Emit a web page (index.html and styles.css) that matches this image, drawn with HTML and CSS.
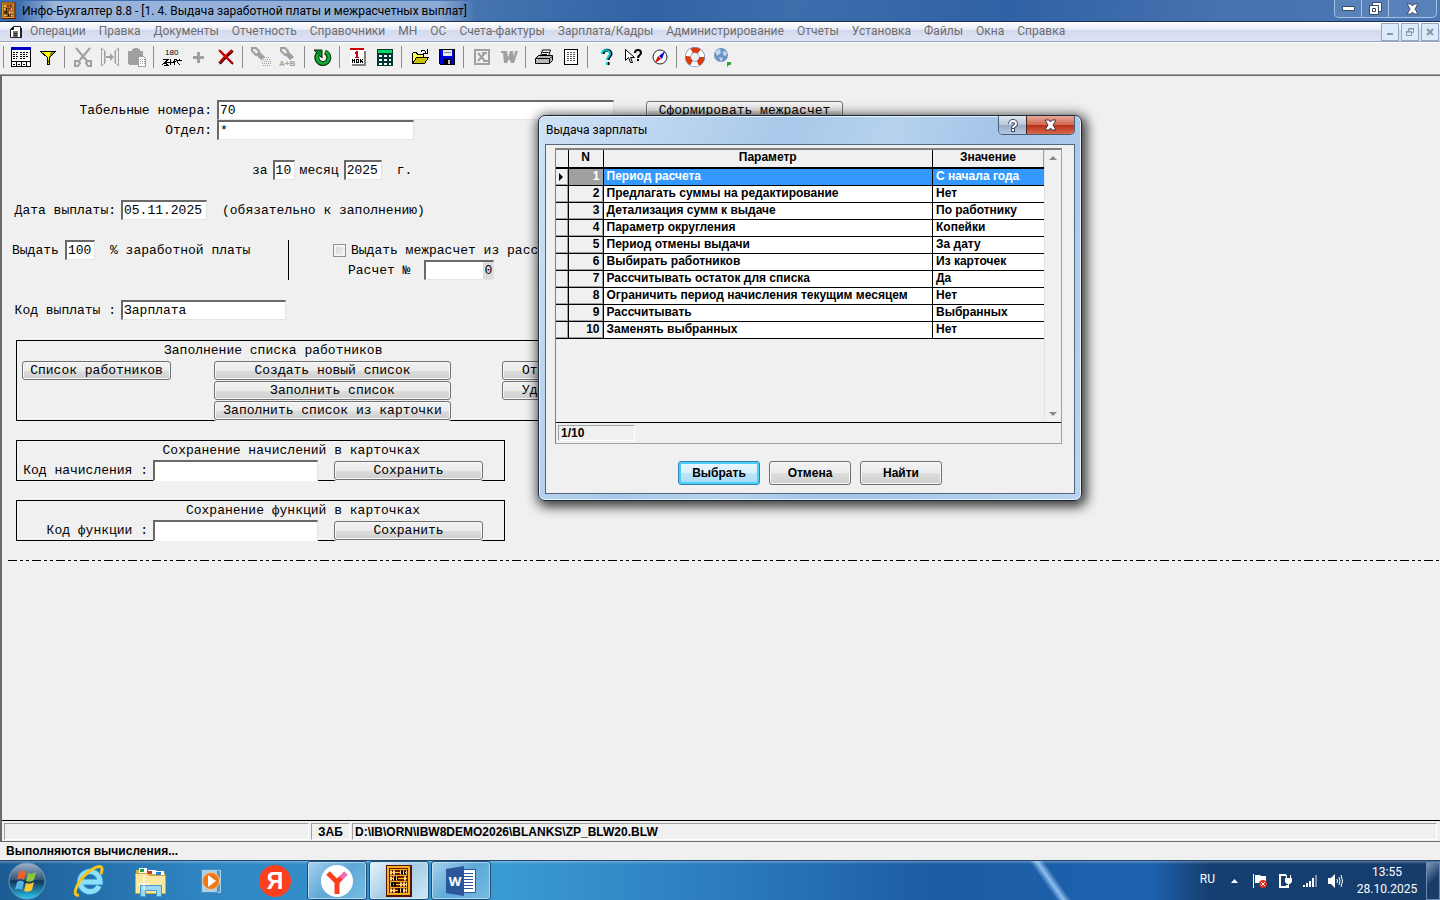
FILE: index.html
```html
<!DOCTYPE html>
<html lang="ru">
<head>
    <meta charset="UTF-8">
    <meta name="viewport" content="width=device-width, initial-scale=1.0">
    <title>Инфо-Бухгалтер 8.8</title>
    <link rel="stylesheet" href="styles.css">
</head>
<body>
    <svg width="0" height="0" class="symbols" aria-hidden="true">
        <symbol id="abacus" viewBox="0 0 26 32">
            <path fill="#5a1000" d="M0 0h26v32H0z"/>
            <path fill="#f0b020" d="M1 1h23v29H1z"/>
            <path fill="#6a1800" d="M3 3h19v25H3z"/>
            <path fill="#f0b020" d="M4 4h17v1H4zM4 10h17v1H4zM4 16h17v1H4zM4 22h17v1H4z"/>
            <path stroke="#f4d020" d="M4 7.500h17M4 13.500h17M4 19.500h17M4 25.500h17"/>
            <path stroke="#ffd890" stroke-width="4" stroke-dasharray="2 1" d="M4 7.500h5M14 7.500h7M4 13.500h9M18 13.500h3M4 19.500h3M14 19.500h7M4 25.500h6M14 25.500h7"/>
            <path stroke="#000" stroke-width="4" stroke-dasharray="2 1" d="M15 7.500h4M8 13.500h4M5 19.500h6M12 25.500h5"/>
        </symbol>
    </svg>

    <header class="titlebar">
        <svg class="app-icon" width="15" height="17"><use href="#abacus"/></svg>
        <h1 class="app-title">Инфо-Бухгалтер 8.8 - [1. 4. Выдача заработной платы и межрасчетных выплат]</h1>
        <div class="win-buttons">
            <button type="button" class="win-min" aria-label="Свернуть"><svg width="13" height="7"><path fill="#fff" stroke="#3c4a66" d="M.5 1.500h12v4H.5z"/></svg></button>
            <button type="button" class="win-max" aria-label="Восстановить"><svg width="13" height="13"><path fill="#fff" stroke="#3c4a66" d="M3.500.5h9v9h-9z"/><path fill="#fff" stroke="#3c4a66" d="M.5 3.500h9v9h-9zM3.500 6.500h3v3h-3z"/></svg></button>
            <button type="button" class="win-close" aria-label="Закрыть"><svg width="13" height="12"><path fill="#fff" stroke="#3c4a66" d="M1 1h4l1.500 2L8 1h4L9 6l3 5H8L6.500 9 5 11H1l3-5z"/></svg></button>
        </div>
    </header>

    <nav class="menubar">
        <svg class="doc-icon" width="12" height="12"><path fill="#fff" stroke="#222" d="M3.500.5h7v11h-10v-8z"/><path fill="#777" d="M3 5h5v6H3z"/><path stroke="#222" d="M.5 3.500h3v-3M4 7.500h3M4 9.500h3M11.500 2v10"/></svg>
        <button type="button">Операции</button>
        <button type="button">Правка</button>
        <button type="button">Документы</button>
        <button type="button">Отчетность</button>
        <button type="button">Справочники</button>
        <button type="button">МН</button>
        <button type="button">ОС</button>
        <button type="button">Счета-фактуры</button>
        <button type="button">Зарплата/Кадры</button>
        <button type="button">Администрирование</button>
        <button type="button">Отчеты</button>
        <button type="button">Установка</button>
        <button type="button">Файлы</button>
        <button type="button">Окна</button>
        <button type="button">Справка</button>
        <div class="mdi-buttons">
            <button type="button" aria-label="Свернуть окно"><svg width="8" height="8"><path fill="#8496aa" d="M1 5h6v2H1z"/></svg></button>
            <button type="button" aria-label="Восстановить окно"><svg width="8" height="8"><path fill="none" stroke="#8496aa" d="M2.500 3V.5h5v4H6M.5 3.500h5v4h-5zM.5 4h5M2.500 1h5"/></svg></button>
            <button type="button" aria-label="Закрыть окно"><svg width="8" height="8"><path stroke="#8496aa" stroke-width="2" d="M1 1l6 6M7 1L1 7"/></svg></button>
        </div>
    </nav>

    <div class="toolbar">
        <span class="sep"></span>
        <button type="button" aria-label="Журнал"><svg class="ico" viewBox="0 0 20 20"><path fill="#fff" stroke="#000" d="M.5.5h19v19H.5z"/><path fill="#0000c0" d="M0 0h20v3H0z"/><path stroke="#000" stroke-dasharray="2 1" d="M2 5.500h5M9 5.500h9M2 7.500h4M9 7.500h7M2 9.500h5M9 9.500h9M2 11.500h4M9 11.500h6"/><path stroke="#000" d="M0 14.500h20M5.500 14v6M10.500 14v6M15.500 14v6M2 17.500h2M7 17.500h2M12 17.500h2"/></svg></button>
        <button type="button" aria-label="Фильтр"><svg class="ico" viewBox="0 0 20 20"><path fill="#ffff00" stroke="#000" d="M2.500 4.500h15l-6 6v7h-2v-7z"/><path fill="#888000" d="M11 10l5-5h-3zM11 10v6h-1z"/></svg></button>
        <span class="sep"></span>
        <button type="button" disabled aria-label="Вырезать"><svg class="ico smooth" viewBox="0 0 20 20"><path fill="none" stroke="#a0a0a0" stroke-width="2" d="M3 1l11 13M17 1L6 14M9 9l2 2"/><path fill="none" stroke="#a0a0a0" stroke-width="2" d="M2 14h3l2 2-2 3H2zM18 14h-3l-2 2 2 3h3z"/></svg></button>
        <button type="button" disabled aria-label="Копировать"><svg class="ico smooth" viewBox="0 0 20 20"><path fill="none" stroke="#a0a0a0" d="M1.500 1v18M4.500 4v12M1 1l4 3v12l-4 3M18.500 1v18M15.500 4v12M19 1l-4 3v12l4 3"/><path fill="#a0a0a0" d="M6 9h4V6l4 4-4 4v-3H6z"/></svg></button>
        <button type="button" disabled aria-label="Вставить"><svg class="ico" viewBox="0 0 20 20"><path fill="#a0a0a0" d="M1 4h4V2h2V1h4v1h2v2h3v6h-4v8H2l-1-1z"/><path fill="#fff" stroke="#a0a0a0" d="M11.500 9.500h5l2 2v8h-7z"/><path stroke="#a0a0a0" stroke-dasharray="1 1" d="M13 12.500h5M13 14.500h5M13 16.500h5"/></svg></button>
        <span class="sep"></span>
        <button type="button" aria-label="Пересчет"><svg class="ico" viewBox="0 0 20 20"><text x="3" y="8" class="ico-text">180</text><path fill="none" stroke="#000" d="M1 12.500h5l-3 3 3 3H2M8 12v6M8 15h4M12 18v-6h3M18 12l-3 3 3 3M0 18l4-3 4 1 6-2 6-1"/></svg></button>
        <button type="button" disabled aria-label="Добавить"><svg class="ico" viewBox="0 0 20 20"><path stroke="#a0a0a0" stroke-width="3" d="M4 10h11M9.500 4.500v11"/></svg></button>
        <button type="button" aria-label="Удалить"><svg class="ico smooth" viewBox="0 0 20 20"><path fill="none" stroke="#400" stroke-width="2" d="M4 4l13 13M17 4C11 9 8 12 4 17"/><path fill="none" stroke="#d00000" stroke-width="2" d="M3 3l13 13M16 3C10 8 7 11 3 16"/></svg></button>
        <span class="sep"></span>
        <button type="button" disabled aria-label="Найти"><svg class="ico smooth" viewBox="0 0 20 20"><path fill="#e8e8e8" stroke="#a0a0a0" stroke-width="2" d="M1 1h4l3 3v2L5 8 1 4z"/><path fill="#a0a0a0" d="M8 4l6 6-4 3-5-5z"/><path stroke="#a0a0a0" stroke-dasharray="1 1" d="M13 10.500h5M10 12.500h9M11 14.500h9M11 16.500h9M12 18.500h8"/></svg></button>
        <button type="button" disabled aria-label="Заменить"><svg class="ico smooth" viewBox="0 0 20 20"><path fill="#e8e8e8" stroke="#a0a0a0" stroke-width="2" d="M3 1h4l3 3v2L7 8 3 4z"/><path fill="#a0a0a0" d="M10 4l6 6-4 3-5-5z"/><text x="1" y="19" class="ico-text muted">A+B</text></svg></button>
        <span class="sep"></span>
        <button type="button" aria-label="Обновить"><svg class="ico smooth" viewBox="0 0 20 20"><path fill="none" stroke="#002800" stroke-width="5" d="M12 5a6 6 0 1 1-7 2"/><path fill="#008c28" stroke="#002800" d="M1 3h8v8z"/><path fill="none" stroke="#18a838" stroke-width="3" d="M12.500 5a6 6 0 1 1-7.500 2"/></svg></button>
        <span class="sep"></span>
        <button type="button" aria-label="Календарь"><svg class="ico" viewBox="0 0 20 20"><path fill="#808080" d="M4 4h14v15H4z"/><path fill="#fff" d="M2 2h14v15H2z"/><path fill="#d00000" d="M2 1h14v2H2zM8 4h2v7H8zM7 5h1v2H7zM7 10h4v1H7z"/><path fill="none" stroke="#000" d="M4 16v-4M4 13h2M6.500 12v4M8 12.500h2v3H8zM12 16v-4M12 14h3M15 12l-2 2 2 2"/></svg></button>
        <button type="button" aria-label="Калькулятор"><svg class="ico" viewBox="0 0 20 20"><path fill="#003830" d="M2 2h16v17H2z"/><path fill="#00d860" d="M3 3h14v3H3z"/><path fill="#fff" d="M4 8h3v2H4zM9 8h3v2H9zM14 8h2v2h-2zM4 12h3v2H4zM9 12h3v2H9zM14 12h2v2h-2zM4 16h3v2H4zM9 16h3v2H9zM14 16h2v2h-2z"/></svg></button>
        <span class="sep"></span>
        <button type="button" aria-label="Открыть"><svg class="ico" viewBox="0 0 20 20"><path fill="#ffff60" stroke="#000" d="M2.500 16.500v-10l1-1h3l1 2h6v3"/><path fill="#c8c000" stroke="#000" d="M2.500 16.500l4-6h12l-4 6z"/><path fill="none" stroke="#000" d="M11 4.500c1-2 4-2 5 1M17.500 2v4H13"/></svg></button>
        <button type="button" aria-label="Сохранить файл"><svg class="ico" viewBox="0 0 20 20"><path fill="#0000d8" stroke="#000" d="M2.500 2.500h15v15h-14l-1-1z"/><path fill="#e8e8e8" d="M6 3h9v6H6z"/><path fill="#000" d="M6 12h8v5H6z"/><path fill="#c0c0c0" d="M11 13h2v4h-2z"/><path stroke="#888" d="M7 5.500h7"/></svg></button>
        <span class="sep"></span>
        <button type="button" disabled aria-label="Excel"><svg class="ico smooth" viewBox="0 0 20 20"><path fill="#f0f0f0" stroke="#a0a0a0" stroke-width="2" d="M3 3h14v14H3z"/><path fill="none" stroke="#a0a0a0" stroke-width="2" d="M6 6l7 8M13 6l-7 8M10 6h5M11 14h5"/></svg></button>
        <button type="button" disabled aria-label="Word"><svg class="ico smooth" viewBox="0 0 20 20"><path fill="#a0a0a0" d="M2 4h6l1 7 2-7h3l1 6 1-6h3l-4 12h-3l-2-4-2 4H5L4 6H2z"/></svg></button>
        <span class="sep"></span>
        <button type="button" aria-label="Печать"><svg class="ico smooth" viewBox="0 0 20 20"><path fill="#fff" stroke="#000" d="M6.500 9l2-6h8l-2 6"/><path fill="#b8b8b8" stroke="#000" d="M1.500 11.500l3-3h14v5l-3 3h-14z"/><path fill="none" stroke="#000" d="M2 11.500h14l2-2M15.500 12v4M8.500 5.500h6M8 7.500h5"/></svg></button>
        <button type="button" aria-label="Просмотр"><svg class="ico" viewBox="0 0 20 20"><path fill="#fff" stroke="#000" d="M3.500 2.500h13v15h-13z"/><path stroke="#555" stroke-dasharray="2 1" d="M6 5.500h8M6 7.500h8M6 9.500h8M6 11.500h8M6 13.500h8"/></svg></button>
        <span class="sep"></span>
        <button type="button" aria-label="Помощь"><svg class="ico smooth" viewBox="0 0 20 20"><path fill="none" stroke="#000" stroke-width="3" d="M7 7c0-5 8-5 8 0 0 2-3 3-3 6M12 15v3"/><path fill="none" stroke="#00c8d8" stroke-width="2" d="M6 7c0-5 8-5 8 0 0 2-3 3-3 6M11 15v3"/></svg></button>
        <button type="button" aria-label="Что это"><svg class="ico smooth" viewBox="0 0 20 20"><path fill="#fff" stroke="#000" d="M2.500 2.500v11l3-3 2 5h2l-2-5h4z"/><path fill="none" stroke="#000" stroke-width="2" d="M12 6c0-4 6-4 6 0 0 2-3 2-3 5M15 12v2"/></svg></button>
        <button type="button" aria-label="Компас"><svg class="ico smooth" viewBox="0 0 20 20"><circle cx="10" cy="10" r="7" fill="#fff" stroke="#222"/><path fill="#0000d0" d="M15 4l-3 8-3-3z"/><path fill="#e00000" d="M5 16l3-7 3 3z"/></svg></button>
        <span class="sep"></span>
        <button type="button" aria-label="Поддержка"><svg class="ico smooth" viewBox="0 0 20 20"><circle cx="10" cy="10" r="7" fill="none" stroke="#3050a8" stroke-width="6"/><circle cx="10" cy="10" r="7" fill="none" stroke="#fff" stroke-width="5"/><circle cx="10" cy="10" r="7" fill="none" stroke="#d83c10" stroke-width="5" stroke-dasharray="8 6.660"/></svg></button>
        <button type="button" aria-label="Интернет"><svg class="ico smooth" viewBox="0 0 20 20"><circle cx="9" cy="8" r="7" fill="#6c94c4"/><path fill="#c4d8ec" d="M3 4l5-2 1 4-4 3zM11 4l4 1-1 4-3-1zM7 10l4 1-2 4z"/><path fill="#30a838" d="M15 15h4v3h-2l-2 2z"/></svg></button>
    </div>

    <main class="workspace">
        <form class="blank">
            <div class="row">
                <label class="lbl lbl-wide" for="tab">Табельные номера:</label>
                <input class="field w-tab" type="text" id="tab" value="70">
                <button type="button" class="btn btn-calc">Сформировать межрасчет</button>
            </div>
            <div class="row">
                <label class="lbl lbl-wide" for="dept">Отдел:</label>
                <input class="field w-dept" type="text" id="dept" value="*">
            </div>
            <div class="row row-gap row-period">
                <label for="month">за</label>
                <input class="field w-month" type="text" id="month" value="10">
                <label for="year">месяц</label>
                <input class="field w-year" type="text" id="year" value="2025">
                <span class="after">г.</span>
            </div>
            <div class="row row-gap">
                <label class="lbl lbl-mid" for="date">Дата выплаты:</label>
                <input class="field w-date" type="text" id="date" value="05.11.2025">
                <span class="after">(обязательно к заполнению)</span>
            </div>
            <div class="payout row-gap">
                <div class="payout-left">
                    <div class="row">
                        <label class="lbl-pct" for="pct">Выдать</label>
                        <input class="field w-pct" type="text" id="pct" value="100">
                        <span class="after">% заработной платы</span>
                    </div>
                </div>
                <div class="payout-right">
                    <div class="row">
                        <input class="check" type="checkbox" id="inter">
                        <label for="inter">Выдать межрасчет из расс</label>
                    </div>
                    <div class="row row-num">
                        <label for="num">Расчет №</label>
                        <input class="field w-num" type="text" id="num" value="0">
                    </div>
                </div>
            </div>
            <div class="row row-gap">
                <label class="lbl lbl-mid" for="code">Код выплаты :</label>
                <input class="field w-code" type="text" id="code" value="Зарплата">
            </div>

            <section class="box box-list">
                <h2 class="box-title">Заполнение списка работников</h2>
                <div class="list-grid">
                    <div class="col col-staff">
                        <button type="button" class="btn">Список работников</button>
                    </div>
                    <div class="col col-fill">
                        <button type="button" class="btn">Создать новый список</button>
                        <button type="button" class="btn">Заполнить список</button>
                        <button type="button" class="btn">Заполнить список из карточки</button>
                    </div>
                    <div class="col col-extra">
                        <button type="button" class="btn">Открыть список</button>
                        <button type="button" class="btn">Удалить список</button>
                    </div>
                </div>
            </section>

            <section class="box box-save">
                <h2 class="box-title">Сохранение начислений в карточках</h2>
                <div class="row">
                    <label class="lbl lbl-box" for="accr">Код начисления :</label>
                    <input class="field w-code" type="text" id="accr">
                    <button type="button" class="btn btn-save">Сохранить</button>
                </div>
            </section>

            <section class="box box-save">
                <h2 class="box-title">Сохранение функций в карточках</h2>
                <div class="row">
                    <label class="lbl lbl-box" for="func">Код функции :</label>
                    <input class="field w-code" type="text" id="func">
                    <button type="button" class="btn btn-save">Сохранить</button>
                </div>
            </section>
            <div class="dashline"></div>
        </form>
        <div class="docstatus">
            <span class="cell cell-empty"></span>
            <span class="cell cell-mode">ЗАБ</span>
            <span class="cell cell-path">D:\IB\ORN\IBW8DEMO2026\BLANKS\ZP_BLW20.BLW</span>
        </div>
    </main>

    <footer class="appstatus">Выполняются вычисления...</footer>

    <div class="taskbar">
        <button type="button" class="start" aria-label="Пуск">
            <svg width="38" height="38" viewBox="0 0 38 38">
                <defs>
                    <linearGradient id="orb" x2="0" y2="1"><stop offset="0" stop-color="#9fb4c8"/><stop offset=".45" stop-color="#37587a"/><stop offset=".5" stop-color="#10335a"/><stop offset="1" stop-color="#28c8f0"/></linearGradient>
                </defs>
                <circle cx="19" cy="19" r="18" fill="url(#orb)" stroke="#6f9cc0"/>
                <path fill="#f0602c" d="M11 10c3-2 5-1 7 0l-2 8c-2-1-4-2-7 0z"/>
                <path fill="#8cc63c" d="M20 11c3 1 5 1 8-1l-2 8c-3 2-5 2-8 1z"/>
                <path fill="#58b4e8" d="M9 20c3-2 5-1 7 0l-2 8c-2-1-4-2-7 0z"/>
                <path fill="#fcc82c" d="M18 21c3 1 5 1 8-1l-2 8c-3 2-5 2-8 1z"/>
            </svg>
        </button>
        <button type="button" class="pin" aria-label="Internet Explorer">
            <svg width="34" height="34" viewBox="0 0 34 34"><path fill="none" stroke="#2888c8" stroke-width="7" d="M27 22a10 10 0 1 1 1-4H10"/><path fill="none" stroke="#8ee0fa" stroke-width="5" d="M27 22a10 10 0 1 1 1-4H10"/><path fill="none" stroke="#f4c41c" stroke-width="3" d="M7 31C-2 33 6 15 19 6c6-4 11-5 11-1 0 2 0 3-1 5"/></svg>
        </button>
        <button type="button" class="pin" aria-label="Проводник">
            <svg width="34" height="34" viewBox="0 0 34 34"><path fill="#d8b44c" d="M2 6h9l2 3h18v20H2z"/><path fill="#fff" d="M5 4h8v5H5zM14 6h8v4h-8zM22 7h8v4h-8z"/><path fill="#20a040" d="M6 5h4v3H6z"/><path fill="#d83020" d="M14 7h4v3h-4z"/><path fill="#2080d8" d="M22 8h5v3h-5z"/><path fill="#f8e8a0" stroke="#d0a840" d="M1.500 9.500h11l3 2h16v18h-30z"/><path fill="#9cd8f0" stroke="#4898c8" d="M6.500 21.500h21v11h-5v-6h-11v6h-5z"/><path stroke="#fff" d="M10 12v14M4 20h12"/></svg>
        </button>
        <button type="button" class="pin" aria-label="Проигрыватель">
            <svg width="34" height="34" viewBox="0 0 34 34"><path fill="#4c9cd0" stroke="#a8d8f0" d="M10.500 6.500h14v22h-14z"/><path fill="#a8d0e8" stroke="#5090b8" d="M5.500 5.500h16v23h-16z"/><circle cx="15" cy="17" r="8.500" fill="#f07818" stroke="#fbc48c"/><path fill="#fff" d="M12 11l8 6-8 6z"/></svg>
        </button>
        <button type="button" class="pin" aria-label="Яндекс">
            <svg width="34" height="34" viewBox="0 0 34 34"><circle cx="17" cy="17" r="16" fill="#fc3f1d"/><text x="17" y="25" class="ya">Я</text></svg>
        </button>
        <button type="button" class="task" aria-label="Яндекс Браузер">
            <svg width="34" height="34" viewBox="0 0 34 34"><circle cx="17" cy="17" r="16" fill="#fff"/><path fill="none" stroke="#fc3f1d" stroke-width="5" d="M8 9l9 9v12"/><path stroke="#f06cb0" stroke-width="5" d="M26 9l-6 6"/><path stroke="#fc3f1d" stroke-width="5" d="M21 14l-5 5"/></svg>
        </button>
        <button type="button" class="task active" aria-label="Инфо-Бухгалтер">
            <svg width="26" height="32"><use href="#abacus"/></svg>
        </button>
        <button type="button" class="task" aria-label="Word">
            <svg width="32" height="32" viewBox="0 0 32 32"><path fill="#fff" stroke="#2b579a" d="M17.500 4.500h13v23h-13z"/><path stroke="#2b579a" d="M19 8.500h9M19 11.500h9M19 14.500h9M19 17.500h9M19 20.500h9M19 23.500h9"/><path fill="#2b579a" d="M1 4l18-3v30L1 28z"/><text x="10" y="21" class="word">W</text></svg>
        </button>
        <div class="tray">
            <span class="lang">RU</span>
            <button type="button" aria-label="Скрытые значки"><svg width="9" height="5"><path fill="#fff" d="M1 5l3.500-4L8 5z"/></svg></button>
            <button type="button" aria-label="Центр поддержки"><svg width="16" height="16" viewBox="0 0 16 16"><path fill="#fff" d="M1 1h1v14H1zM3 2h5l1 1h5v7H3z"/><circle cx="11" cy="11" r="4" fill="#e03020"/><path stroke="#fff" d="M9 9l4 4M13 9l-4 4"/></svg></button>
            <button type="button" aria-label="Питание"><svg width="16" height="16" viewBox="0 0 16 16"><path fill="none" stroke="#fff" stroke-width="2" d="M9 2H3v12h7v-2"/><path fill="#fff" d="M5 1h3v2H5zM8 5h7v4l-2 2h-3L8 9zM9 2h1v3H9zM13 2h1v3h-1zM11 11h1v4h-1z"/></svg></button>
            <button type="button" aria-label="Сеть"><svg width="16" height="14" viewBox="0 0 16 14"><path fill="#fff" d="M1 11h2v2H1zM4 9h2v4H4zM7 7h2v6H7zM10 4h2v9h-2z"/><path fill="#7890b0" d="M13 1h2v12h-2z"/></svg></button>
            <button type="button" aria-label="Громкость"><svg width="16" height="16" viewBox="0 0 16 16"><path fill="#fff" d="M1 5h3l4-4v14l-4-4H1z"/><path fill="none" stroke="#fff" d="M10 6q1 2 0 4M12 4q2 4 0 8M14 2q3 6 0 12"/></svg></button>
            <div class="clock"><span>13:55</span><span>28.10.2025</span></div>
        </div>
        <button type="button" class="show-desktop" aria-label="Свернуть все окна"></button>
    </div>

    <div class="dialog" role="dialog" aria-labelledby="dlg-title">
        <div class="dialog-head">
            <h2 id="dlg-title">Выдача зарплаты</h2>
            <div class="dialog-ctl">
                <button type="button" class="dlg-help" aria-label="Справка по окну"><svg width="11" height="13"><path fill="none" stroke="#3c4a66" stroke-width="4" d="M3 5c0-4 6-4 6 0 0 2-3 2-3 4M6 9v4"/><path fill="none" stroke="#fff" stroke-width="2" d="M3 5c0-4 6-4 6 0 0 2-3 2-3 4M6 10v2"/></svg></button>
                <button type="button" class="dlg-close" aria-label="Закрыть диалог"><svg width="13" height="12"><path fill="#fff" stroke="#4a3040" d="M1 1h4l1.500 2L8 1h4L9 6l3 5H8L6.500 9 5 11H1l3-5z"/></svg></button>
            </div>
        </div>
        <div class="dialog-body">
            <div class="grid">
                <div class="grid-main">
                    <div class="grid-table">
                        <table>
                            <thead>
                                <tr><th class="c-mark"></th><th class="c-n">N</th><th>Параметр</th><th class="c-val">Значение</th></tr>
                            </thead>
                            <tbody>
                                <tr class="selected"><td class="mark"><svg width="5" height="8"><path d="M0 0l4 4-4 4z"/></svg></td><td class="num">1</td><td>Период расчета</td><td>С начала года</td></tr>
                                <tr><td class="mark"></td><td class="num">2</td><td>Предлагать суммы на редактирование</td><td>Нет</td></tr>
                                <tr><td class="mark"></td><td class="num">3</td><td>Детализация сумм к выдаче</td><td>По работнику</td></tr>
                                <tr><td class="mark"></td><td class="num">4</td><td>Параметр округления</td><td>Копейки</td></tr>
                                <tr><td class="mark"></td><td class="num">5</td><td>Период отмены выдачи</td><td>За дату</td></tr>
                                <tr><td class="mark"></td><td class="num">6</td><td>Выбирать работников</td><td>Из карточек</td></tr>
                                <tr><td class="mark"></td><td class="num">7</td><td>Рассчитывать остаток для списка</td><td>Да</td></tr>
                                <tr><td class="mark"></td><td class="num">8</td><td>Ограничить период начисления текущим месяцем</td><td>Нет</td></tr>
                                <tr><td class="mark"></td><td class="num">9</td><td>Рассчитывать</td><td>Выбранных</td></tr>
                                <tr><td class="mark"></td><td class="num">10</td><td>Заменять выбранных</td><td>Нет</td></tr>
                            </tbody>
                        </table>
                    </div>
                    <div class="scroll">
                        <button type="button" aria-label="Вверх"><svg width="8" height="4"><path fill="#888" d="M0 4l4-4 4 4z"/></svg></button>
                        <button type="button" aria-label="Вниз"><svg width="8" height="4"><path fill="#888" d="M0 0h8L4 4z"/></svg></button>
                    </div>
                </div>
                <div class="grid-foot"><span>1/10</span></div>
            </div>
            <div class="dialog-actions">
                <button type="button" class="dlg-btn default">Выбрать</button>
                <button type="button" class="dlg-btn">Отмена</button>
                <button type="button" class="dlg-btn">Найти</button>
            </div>
        </div>
    </div>
</body>
</html>
```

FILE: styles.css
```css
* {
    box-sizing: border-box;
}

body {
    display: flex;
    flex-direction: column;
    height: 100vh;
    margin: 0;
    overflow: hidden;
    background: #f0f0f0;
    color: #000;
    font-family: Roboto, sans-serif;
    font-size: 12px;
}

h1, h2 {
    margin: 0;
    font-size: inherit;
    font-weight: normal;
}

button {
    padding: 0;
    border: 0;
    background: none;
    color: inherit;
    font: inherit;
    white-space: nowrap;
}

svg {
    display: block;
    flex: none;
}

.symbols {
    position: absolute;
}

/* window title */
.titlebar {
    display: flex;
    align-items: center;
    flex: 0 0 22px;
    padding: 0 3px 0 1px;
    border-bottom: 1px solid #1c2f52;
    background: linear-gradient(100deg, #3c6cae 0%, #4a78b4 30%, #3263a4 45%, #3e6dac 55%, #2f62a4 70%, #4872b0 85%, #4a78b8 100%);
}

.app-title {
    margin-left: 2px;
    padding: 0 8px 0 4px;
    line-height: 20px;
    background: linear-gradient(90deg, transparent, #9cb6dc 8%, #8caad4 92%, transparent);
    white-space: nowrap;
}

.win-buttons {
    display: flex;
    align-self: flex-start;
    margin-left: auto;
    border: 1px solid #a9c0e0;
    border-top: 0;
    border-radius: 0 0 5px 5px;
    background: #5a82ba;
}

.win-buttons button {
    display: flex;
    align-items: center;
    justify-content: center;
    width: 27px;
    height: 17px;
    border-right: 1px solid #a9c0e0;
}

.win-buttons .win-close {
    width: 47px;
    border-right: 0;
}

/* menu */
.menubar {
    display: flex;
    align-items: center;
    gap: 13px;
    flex: 0 0 20px;
    padding: 0 1px 0 10px;
    border-bottom: 1px solid #9aa4bc;
    background: linear-gradient(#fff 0%, #e8ecf6 40%, #d4daee 42%, #dde3f4 100%);
    color: #6d6d6d;
}

.menubar > button {
    line-height: 19px;
}

.doc-icon {
    margin-right: -5px;
}

.mdi-buttons {
    display: flex;
    gap: 2px;
    margin-left: auto;
}

.mdi-buttons button {
    display: flex;
    align-items: center;
    justify-content: center;
    width: 18px;
    height: 18px;
    border: 1px solid #93a7c4;
    background: #dcebfa;
}

/* toolbar */
.toolbar {
    display: flex;
    align-items: center;
    flex: 0 0 33px;
    padding-bottom: 3px;
    border-top: 1px solid #fff;
    border-bottom: 1px solid #a0a0a0;
}

.toolbar button {
    display: flex;
    justify-content: center;
    width: 27px;
}

.toolbar .sep {
    width: 8px;
    height: 22px;
    background: linear-gradient(90deg, transparent 3px, #8c8c8c 3px, #8c8c8c 4px, transparent 4px);
}

.toolbar .sep:first-child {
    width: 7px;
}

.ico {
    width: 20px;
    height: 20px;
    shape-rendering: crispEdges;
}

.ico.smooth {
    shape-rendering: auto;
}

.ico-text {
    font: 8px "Liberation Sans", sans-serif;
}

.ico-text.muted {
    fill: #a0a0a0;
    font-weight: bold;
}

/* document area */
.workspace {
    display: flex;
    flex: 1;
    flex-direction: column;
    border: 1px solid #696969;
    border-width: 1px 0 1px 2px;
    font-family: "Liberation Mono", monospace;
    font-size: 13px;
}

.blank {
    flex: 1;
    padding: 24px 0 0 10px;
}

.row {
    display: flex;
    align-items: center;
    gap: 5px;
    height: 20px;
    white-space: nowrap;
}

.row-gap {
    margin-top: 20px;
}

.lbl {
    text-align: right;
}

.lbl-wide {
    width: 200px;
}

.lbl-mid {
    width: 104px;
}

.lbl-pct {
    width: 48px;
}

.lbl-box {
    width: 131px;
}

.row-period {
    padding-left: 240px;
}

.after {
    margin-left: 10px;
}

.field {
    height: 20px;
    padding: 0 1px;
    border: 2px solid #696969;
    border-right: 1px solid #e3e3e3;
    border-bottom: 1px solid #e3e3e3;
    border-radius: 0;
    background: #fff;
    color: #000;
    font: inherit;
}

.w-tab {
    width: 397px;
}

.w-dept {
    width: 197px;
}

.w-month {
    width: 22px;
}

.w-year {
    width: 38px;
}

.w-date {
    width: 86px;
}

.w-pct {
    width: 30px;
}

.w-num {
    width: 70px;
    background: linear-gradient(#dcdcdc, #dcdcdc) right / 10px 100% no-repeat #fff;
    text-align: right;
}

.w-code {
    width: 165px;
}

.payout {
    display: flex;
}

.payout-left {
    width: 277px;
    border-right: 1px solid #000;
}

.payout-right {
    padding-left: 44px;
}

.check {
    appearance: none;
    width: 13px;
    height: 13px;
    margin: 0;
    border: 1px solid #8e8f8f;
    background: linear-gradient(135deg, #cbcfd5, #f6f6f6);
    box-shadow: inset 0 0 0 2px #f4f4f4;
}

.row-num {
    gap: 14px;
    padding-left: 15px;
}

.btn {
    height: 19px;
    border: 1px solid #707070;
    border-radius: 3px;
    background: linear-gradient(#f2f2f2 0%, #ebebeb 50%, #dddddd 51%, #cfcfcf 100%);
    box-shadow: inset 0 0 0 1px #f8f8f8, 0 0 0 1px #f0f0f0;
}

.btn-calc {
    width: 197px;
    margin-left: 27px;
}

.box {
    margin: 0 0 19px 4px;
    border: 1px solid #000;
}

.blank .row-gap + .box {
    margin-top: 20px;
}

.box-title {
    height: 19px;
    line-height: 19px;
}

.box-list {
    width: 760px;
}

.box-list .box-title {
    padding-left: 147px;
}

.list-grid {
    display: flex;
    height: 60px;
    padding-left: 5px;
}

.col {
    display: flex;
    flex-direction: column;
    gap: 1px;
    padding-top: 1px;
}

.col-staff {
    width: 149px;
}

.col-fill {
    width: 237px;
    margin-left: 43px;
}

.col-extra {
    width: 149px;
    margin-left: 51px;
}

.box-save {
    width: 489px;
}

.box-save .box-title {
    padding-right: 84px;
    text-align: right;
}

.box-save .field {
    height: 21px;
    border-bottom-color: #fff;
}

.box-save .row {
    align-items: flex-start;
    line-height: 21px;
}

.btn-save {
    width: 149px;
    margin: 1px 0 0 11px;
    line-height: 17px;
}

.dashline {
    height: 1px;
    margin-left: -4px;
    background: repeating-linear-gradient(90deg, #000 0 9px, transparent 9px 12px, #000 12px 15px, transparent 15px 18px, #000 18px 21px, transparent 21px 24px);
}

.docstatus {
    display: flex;
    gap: 2px;
    height: 21px;
    padding: 2px 3px 1px 2px;
    border-top: 1px solid #000;
    font: bold 12px/16px "Liberation Sans", sans-serif;
}

.cell {
    padding: 0 2px;
    border: 1px solid #a0a0a0;
    border-right-color: #fff;
    border-bottom-color: #fff;
}

.cell-empty {
    width: 305px;
}

.cell-mode {
    width: 39px;
    text-align: center;
}

.cell-path {
    flex: 1;
}

.appstatus {
    flex: 0 0 18px;
    padding-left: 6px;
    font: bold 12px/18px "Liberation Sans", sans-serif;
}

/* taskbar */
.taskbar {
    display: flex;
    flex: 0 0 40px;
    align-items: center;
    border-top: 1px solid #24486c;
    background:
        linear-gradient(rgba(255, 255, 255, 0.3), rgba(255, 255, 255, 0) 3px),
        linear-gradient(90deg, transparent 80%, rgba(20, 56, 100, 0.8) 84%),
        linear-gradient(55deg, transparent 72%, rgba(170, 215, 255, 0.8) 72.5%, transparent 73%),
        linear-gradient(90deg, #1c5c94 0%, #2f86c2 14%, #3a9ad2 35%, #2c7cc0 50%, #1c5ca4 65%, #1d62ae 80%, #1c4c86 100%);
    color: #fff;
}

.start {
    width: 58px;
    padding-left: 8px;
}

.pin {
    display: flex;
    justify-content: center;
    width: 62px;
}

.pin + .task {
    margin-left: 1px;
}

.task {
    display: flex;
    align-items: center;
    justify-content: center;
    width: 60px;
    height: 39px;
    margin-right: 2px;
    border: 1px solid #1d4f78;
    border-radius: 3px;
    background: linear-gradient(135deg, #a8d2ec, #5ca8d8 50%, #78bce2);
    box-shadow: inset 0 0 0 1px rgba(220, 240, 255, 0.6);
}

.task.active {
    background: linear-gradient(135deg, #e8f4fb, #a4cce4 50%, #d0e8f6);
}

.tray {
    display: flex;
    align-items: center;
    gap: 9px;
    margin-left: auto;
}

.lang {
    margin-right: 6px;
    padding-bottom: 4px;
}

.tray button:nth-of-type(1) {
    margin-right: 4px;
}

.clock {
    display: flex;
    flex-direction: column;
    align-items: center;
    width: 70px;
    line-height: 17px;
}

.show-desktop {
    width: 14px;
    height: 38px;
    margin-left: 4px;
    border: 1px solid #6a8cb4;
    background: linear-gradient(135deg, #8098b8, #1c3c68 50%);
}

.ya {
    fill: #fff;
    font: bold 23px "Liberation Sans", sans-serif;
    text-anchor: middle;
}

.word {
    fill: #fff;
    font: bold 13px "Open Sans", sans-serif;
    text-anchor: middle;
}

/* dialog window lies over the blank */
.dialog {
    position: absolute;
    top: 115px;
    left: 538px;
    width: 544px;
    padding: 0 6px 6px;
    border: 1px solid #1e2a3c;
    border-radius: 7px;
    background: linear-gradient(115deg, #cfe2f6 0%, #bad4ee 20%, #a9c9ea 35%, #b6d2ee 50%, #a4c4e8 65%, #b9d5f0 100%);
    box-shadow: inset 0 0 0 1px #e6f2fc, 2px 3px 12px 3px rgba(0, 0, 0, 0.75);
}

.dialog-head {
    display: flex;
    align-items: center;
    height: 28px;
}

.dialog-head h2 {
    padding-left: 1px;
}

.dialog-ctl {
    display: flex;
    align-self: flex-start;
    margin-left: auto;
    border: 1px solid #4c5f78;
    border-top: 0;
    border-radius: 0 0 5px 5px;
    overflow: hidden;
}

.dialog-ctl button {
    display: flex;
    align-items: center;
    justify-content: center;
    height: 18px;
}

.dialog-ctl .dlg-help {
    width: 27px;
    background: linear-gradient(#e0e8f2, #b8c6d8 50%, #98acc6 51%, #b4c8e0);
}

.dialog-ctl .dlg-close {
    width: 48px;
    border-left: 1px solid #4c2020;
    background: linear-gradient(#e8a898, #d06850 50%, #b83018 51%, #d86848);
}

.dialog-body {
    padding: 3px 12px 8px 9px;
    border: 1px solid #54657c;
    background: #f0f0f0;
    font: bold 12px "Liberation Sans", sans-serif;
}

.grid {
    border: 1px solid #808080;
    border-top-width: 2px;
    border-right-color: #a0a0a0;
    border-bottom-color: #a0a0a0;
}

.grid-main {
    display: flex;
    height: 273px;
    border-bottom: 1px solid #000;
}

.grid-table {
    flex: 1;
}

.grid table {
    width: 100%;
    border-collapse: collapse;
    table-layout: fixed;
}

.grid th {
    height: 18px;
    padding: 0 0 3px;
    border-right: 1px solid #000;
    border-bottom: 2px solid #000;
    line-height: 13px;
}

.grid th:last-child {
    border-right-color: #a0a0a0;
}

.grid .c-mark {
    width: 12px;
}

.grid .c-n {
    width: 35px;
}

.grid .c-val {
    width: 111px;
}

.grid td {
    height: 17px;
    padding: 0 3px;
    border-right: 1px solid #000;
    border-bottom: 1px solid #000;
    background: #fff;
    line-height: 15px;
    white-space: nowrap;
}

.grid td:last-child {
    border-right: 0;
}

.grid td.mark,
.grid td.num {
    background: #f0f0f0;
    box-shadow: inset -1px -1px 0 #a0a0a0;
    text-align: right;
}

.grid .selected td {
    background: #3399ff;
    color: #fff;
}

.grid .selected td.num {
    background: #a0a0a0;
}

.grid .selected td.mark {
    background: #f0f0f0;
}

.scroll {
    display: flex;
    flex-direction: column;
    justify-content: space-between;
    width: 17px;
    padding: 6px 4px;
    border-left: 1px solid #e3e3e3;
}

.grid-foot {
    padding: 2px;
    line-height: 14px;
}

.grid-foot span {
    display: block;
    width: 77px;
    padding-left: 2px;
    border: 1px solid #a0a0a0;
    border-right-color: #fff;
    border-bottom-color: #fff;
}

.dialog-actions {
    display: flex;
    justify-content: center;
    gap: 9px;
    margin-top: 17px;
    padding-left: 3px;
}

.dlg-btn {
    width: 82px;
    height: 24px;
    border: 1px solid #707070;
    border-radius: 3px;
    background: linear-gradient(#f2f2f2 0%, #ebebeb 50%, #dddddd 51%, #cfcfcf 100%);
    box-shadow: inset 0 0 0 1px #f8f8f8;
}

.dlg-btn.default {
    border-color: #3c7fb1;
    background: linear-gradient(#eaf6fd 0%, #d9f0fc 50%, #bee6fd 51%, #a7d9f5 100%);
    box-shadow: inset 0 0 0 2px #48d0f8;
}
```
